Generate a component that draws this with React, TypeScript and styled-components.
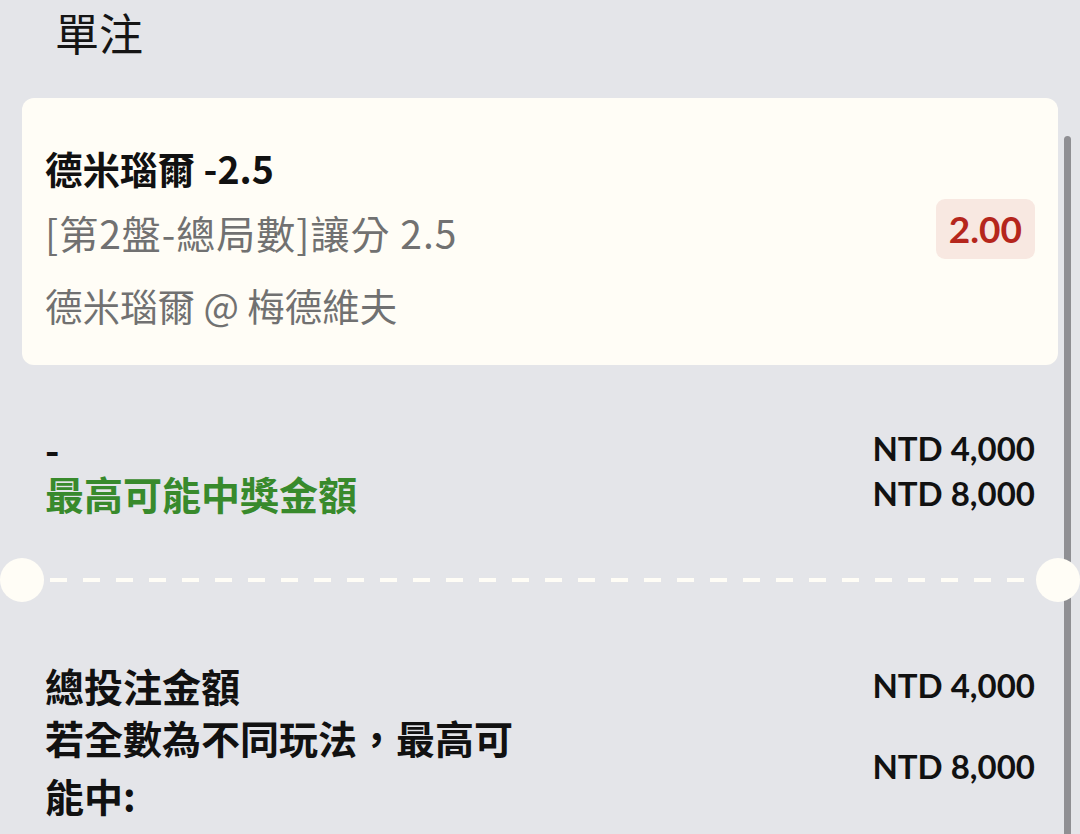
import React from "react";
import styled, { createGlobalStyle } from "styled-components";

const Global = createGlobalStyle`
  html, body { margin: 0; padding: 0; }
  body {
    background: #e4e5e9;
    font-family: "Noto Sans CJK TC", "Noto Sans", sans-serif;
    color: #111111;
  }
`;

const Page = styled.div`
  position: relative;
  width: 1080px;
  height: 834px;
  overflow: hidden;
  background: #e4e5e9;
`;

const Scrollbar = styled.div`
  position: absolute;
  top: 136px;
  right: 9px;
  bottom: 0;
  width: 7px;
  border-radius: 4px 4px 0 0;
  background: #8f8f93;
`;

const Header = styled.h1`
  margin: 0;
  padding-left: 55px;
  height: 64px;
  line-height: 64px;
  font-size: 44px;
  font-weight: 400;
  color: #151515;
`;

const Body = styled.div`
  padding: 34px 22px 0;
`;

const Card = styled.div`
  display: flex;
  align-items: center;
  justify-content: space-between;
  height: 267px;
  box-sizing: border-box;
  padding: 36px 23px 26px;
  background: #fffdf6;
  border-radius: 12px;
`;

const CardInfo = styled.div`
  display: flex;
  flex-direction: column;
`;

const Selection = styled.div`
  font-size: 37.5px;
  line-height: 64px;
  font-weight: 700;
  color: #111;
`;

const Market = styled.div<{ $size: number; $spacing?: number; $gap?: number }>`
  font-size: ${(p) => p.$size}px;
  letter-spacing: ${(p) => p.$spacing ?? 0}px;
  line-height: 64px;
  font-weight: 400;
  color: #717171;
  margin-top: ${(p) => p.$gap ?? 0}px;
`;

const Odds = styled.div`
  display: flex;
  align-items: center;
  height: 60px;
  padding: 0 13px;
  margin-bottom: 16px;
  border-radius: 9px;
  background: #f8e8e1;
  color: #b5261c;
  font-family: Lato, Roboto, sans-serif;
  font-size: 37px;
  font-weight: 700;
`;

const Summary = styled.div<{ $top: number }>`
  display: flex;
  flex-direction: column;
  padding: 0 23px;
  margin-top: ${(p) => p.$top}px;
`;

const Row = styled.div`
  display: flex;
  align-items: center;
  justify-content: space-between;
`;

const Label = styled.div<{ $tone?: "green" | "dark"; $lh?: number }>`
  max-width: 475px;
  font-size: 39px;
  font-weight: 700;
  line-height: ${(p) => p.$lh ?? 45}px;
  color: ${(p) => (p.$tone === "green" ? "#388a2c" : "#111111")};
`;

const Amount = styled.div`
  font-family: Lato, Roboto, sans-serif;
  font-size: 33px;
  font-weight: 700;
  line-height: 45px;
  color: #111;
  white-space: nowrap;
`;

const Divider = styled.div`
  display: flex;
  align-items: center;
  height: 44px;
  margin: 42px -22px 0;
`;

const Notch = styled.div`
  position: relative;
  z-index: 1;
  flex: 0 0 44px;
  height: 44px;
  border-radius: 50%;
  background: #fffdf6;
`;

const Dashes = styled.div`
  flex: 1;
  height: 4px;
  margin: 0 6px;
  background: repeating-linear-gradient(
    to right,
    #fffdf6 0,
    #fffdf6 17px,
    transparent 17px,
    transparent 33px
  );
`;

export default function App() {
  return (
    <Page>
      <Global />
      <Scrollbar />
      <Header>單注</Header>
      <Body>
        <Card>
          <CardInfo>
            <Selection>德米瑙爾 -2.5</Selection>
            <Market $size={39} $spacing={1}>[第2盤-總局數]讓分 2.5</Market>
            <Market $size={37.5} $gap={9}>德米瑙爾 @ 梅德維夫</Market>
          </CardInfo>
          <Odds>2.00</Odds>
        </Card>

        <Summary $top={61}>
          <Row>
            <Label>-</Label>
            <Amount>NTD 4,000</Amount>
          </Row>
          <Row>
            <Label $tone="green">最高可能中獎金額</Label>
            <Amount>NTD 8,000</Amount>
          </Row>
        </Summary>

        <Divider>
          <Notch />
          <Dashes />
          <Notch />
        </Divider>

        <Summary $top={61}>
          <Row>
            <Label>總投注金額</Label>
            <Amount>NTD 4,000</Amount>
          </Row>
          <Row>
            <Label $lh={58}>若全數為不同玩法，最高可能中:</Label>
            <Amount>NTD 8,000</Amount>
          </Row>
        </Summary>
      </Body>
    </Page>
  );
}
